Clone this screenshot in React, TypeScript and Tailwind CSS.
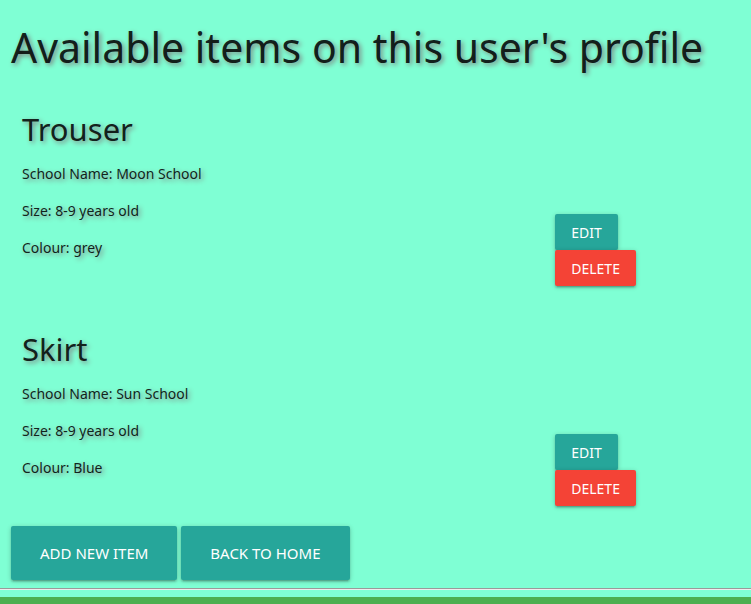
type Item = { name: string; school: string; size: string; colour: string };

const items: Item[] = [
  { name: "Trouser", school: "Moon School", size: "8-9 years old", colour: "grey" },
  { name: "Skirt", school: "Sun School", size: "8-9 years old", colour: "Blue" },
];

const raised =
  "rounded-xs uppercase text-white shadow-[0_2px_2px_0_rgba(0,0,0,0.14),0_3px_1px_-2px_rgba(0,0,0,0.12),0_1px_5px_0_rgba(0,0,0,0.2)]";

function ItemRow({ item }: { item: Item }) {
  return (
    <section className="grid grid-cols-4 items-end">
      <div className="col-span-3 px-[11px] pb-[27px]">
        <h2 className="mb-[15px] text-[31px] leading-[38px]">{item.name}</h2>
        <div className="flex flex-col gap-[15px] text-[14px] leading-[22px]">
          <p>School Name: {item.school}</p>
          <p>Size: {item.size}</p>
          <p>Colour: {item.colour}</p>
        </div>
      </div>
      <div className="flex flex-col items-start pl-[11px] text-[14px]">
        <button type="button" className={`${raised} h-9 bg-[#26a69a] px-4`}>
          Edit
        </button>
        <button type="button" className={`${raised} h-9 bg-[#f44336] px-4`}>
          Delete
        </button>
      </div>
    </section>
  );
}

export default function App() {
  return (
    <div className="min-h-screen bg-[#7fffd4] font-['Noto_Sans','Segoe_UI',sans-serif] text-black/87 [text-shadow:2px_2px_5px_gray]">
      <main className="px-[11px] pt-[23px]">
        <h1 className="mb-[39px] text-[41px] leading-[48px] whitespace-nowrap">
          Available items on this user's profile
        </h1>
        <div className="mr-[18px] flex flex-col gap-11">
          {items.map((item) => (
            <ItemRow key={item.name} item={item} />
          ))}
        </div>
        <div className="mt-5 flex gap-1 text-[15px]">
          <button type="button" className={`${raised} h-[54px] bg-[#26a69a] px-[29px]`}>
            Add new item
          </button>
          <button type="button" className={`${raised} h-[54px] bg-[#26a69a] px-[29px]`}>
            Back to home
          </button>
        </div>
      </main>
      <hr className="mt-2 mb-[7px] h-0 border-x-0 border-t border-b border-t-[#9a9a9a] border-b-[#eeeeee]" />
      <footer className="h-5 bg-[#4caf50]" />
    </div>
  );
}
